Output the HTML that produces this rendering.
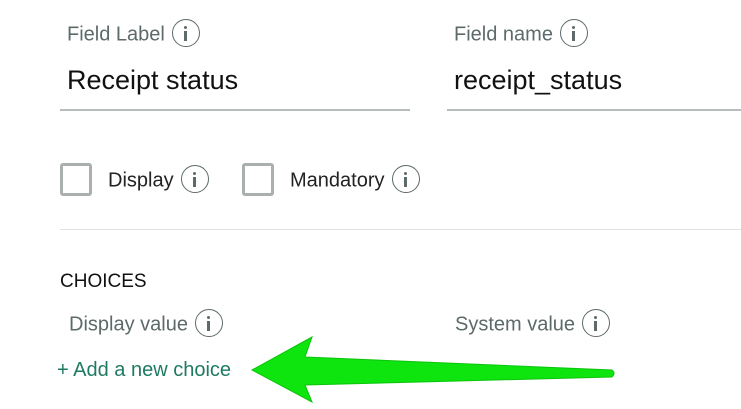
<!DOCTYPE html><html><head><style>
body{margin:0;width:741px;height:409px;background:#fff;font-family:"Liberation Sans",sans-serif;position:relative;overflow:hidden}
.a{position:absolute;white-space:nowrap}
.lbl{color:#5e6a6a;font-size:20px}
.val{color:#111;font-size:27px}
.i{display:inline-block;width:28px;height:28px;border:1.6px solid #5e6a6a;border-radius:50%;box-sizing:border-box;vertical-align:middle;margin-left:7px;position:relative;top:-2px}
.i:before{content:"";position:absolute;left:11px;top:6px;width:3px;height:3px;background:#5e6a6a;border-radius:50%}
.i:after{content:"";position:absolute;left:11px;top:11px;width:3px;height:10px;background:#5e6a6a}
.cb{position:absolute;width:32px;height:33px;border:3px solid #aab0b0;border-radius:3px;box-sizing:border-box}
.line{position:absolute;height:1px;background:#b7bcbc}
</style></head><body>
<div class="a lbl" style="left:67px;top:21px">Field Label<span class="i"></span></div>
<div class="a lbl" style="left:454px;top:21px">Field name<span class="i"></span></div>
<div class="a val" style="left:67px;top:65px">Receipt status</div>
<div class="a val" style="left:454px;top:65px">receipt_status</div>
<div class="line" style="left:60px;width:350px;top:109px;height:2px"></div>
<div class="line" style="left:447px;width:294px;top:109px;height:2px"></div>
<div class="cb" style="left:60px;top:163px"></div>
<div class="a lbl" style="left:108px;top:167px;color:#222">Display<span class="i"></span></div>
<div class="cb" style="left:242px;top:163px"></div>
<div class="a lbl" style="left:290px;top:167px;color:#222">Mandatory<span class="i"></span></div>
<div class="line" style="left:60px;width:681px;top:229px;background:#e0e3e3"></div>
<div class="a" style="left:60px;top:271px;font-size:19px;color:#111">CHOICES</div>
<div class="a lbl" style="left:69px;top:311px">Display value<span class="i"></span></div>
<div class="a lbl" style="left:455px;top:311px">System value<span class="i"></span></div>
<div class="a" style="left:57px;top:359px;font-size:20px;color:#1f7a62">+ Add a new choice</div>
<svg style="position:absolute;left:0;top:0" width="741" height="409"><path d="M252 370 L312 337 L305 357 L612 370 Q616 373 612 377 L305 385 L312 402 Z" fill="#0ee40e" stroke="#0cc40c" stroke-width="1"/></svg>
</body></html>
